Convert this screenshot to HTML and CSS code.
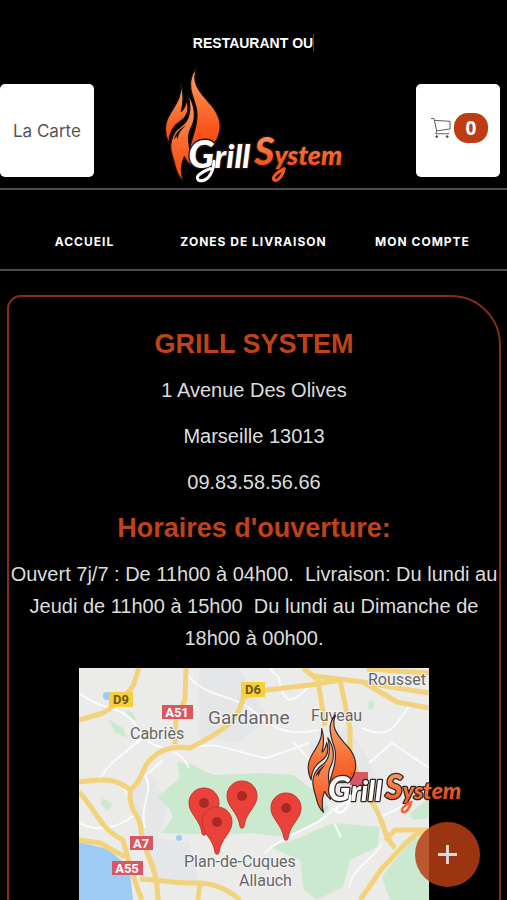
FILE: index.html
```html
<!DOCTYPE html>
<html lang="fr">
  <head>
    <meta charset="utf-8">
    <meta name="viewport" content="width=device-width, initial-scale=1">
    <title>Grill System</title>
    <link rel="stylesheet" href="styles.css">
  </head>
  <body>
    <svg class="defs" width="0" height="0" aria-hidden="true">
      <defs>
        <linearGradient id="fire" x1="0" y1="0" x2="0" y2="1">
          <stop offset="0" stop-color="#f9a070" />
          <stop offset="0.4" stop-color="#fb7a3c" />
          <stop offset="0.75" stop-color="#f9561d" />
          <stop offset="1" stop-color="#fb4c12" />
        </linearGradient>
        <g id="flame">
          <g stroke="#1c1210" stroke-width="4" stroke-linejoin="round" fill="url(#fire)">
            <path d="M126 25 C109 62 128 90 157 122 C190 155 205 190 190 228 C186 245 178 254 160 258 L104 262 C118 215 132 178 123 142 C115 112 100 82 109 54 C112 41 119 31 126 25 Z" />
            <path d="M78 72 C88 105 85 130 79 154 C89 145 93 133 95 120 C105 150 96 171 75 185 C54 198 43 220 41 250 C26 218 29 187 46 160 C61 134 80 112 78 72 Z" />
            <path d="M99 104 C123 139 123 177 108 204 C97 225 101 246 104 265 C108 285 116 300 108 317 C98 309 93 301 88 290 C77 314 77 337 84 362 C63 343 63 325 57 305 C50 281 43 264 49 242 C55 218 64 209 78 199 C104 182 110 148 99 104 Z" />
          </g>
          <path d="M57 239 C61 219 73 208 93 196 C76 213 71 220 68 239 L65 229 Z" fill="#1c1210" />
        </g>
        <g id="swash" fill="none" stroke-width="9" stroke-linecap="round">
          <path d="M177 304 C174 348 151 369 130 360 C119 348 140 337 166 326" stroke="#fff" />
          <path d="M386 334 C378 354 365 367 356 358 C352 348 366 338 388 326" stroke="#f9561d" />
        </g>
      </defs>
      <symbol id="pin" viewBox="0 0 32 50">
        <path d="M16 1 C7 1 1 8 1 16 C1 27 12 32 14 46 C14 49 18 49 18 46 C20 32 31 27 31 16 C31 8 25 1 16 1 Z" fill="#e8423a" stroke="#c5352e" />
        <circle cx="16" cy="16" r="5" fill="#a92a23" />
      </symbol>
    </svg>

    <header>
      <p class="typing">RESTAURANT OU</p>
      <div class="top">
        <a class="box carte" href="#carte">La Carte</a>
        <a class="brand" href="#">
          <svg class="logo" viewBox="24 18 546 360">
            <use href="#flame" />
            <text class="grill" x="100" y="324"><tspan class="capital">G</tspan>rill</text>
            <text class="system" x="298" y="316"><tspan class="capital">S</tspan>ystem</text>
            <use href="#swash" />
          </svg>
        </a>
        <button class="box cart" type="button" aria-label="Panier">
          <svg class="cart-icon" viewBox="0 0 22 22" fill="none" stroke="#555">
            <path d="M0 1 H3 L6 14 L20 12 V4 L4 3 M6 14 L5 17 H19" />
            <circle cx="6" cy="20" r="1" fill="#555" />
            <circle cx="17" cy="20" r="1" fill="#555" />
          </svg>
          <span class="count">0</span>
        </button>
      </div>
      <nav>
        <a href="#accueil">ACCUEIL</a>
        <a href="#zones">ZONES DE LIVRAISON</a>
        <a href="#compte">MON COMPTE</a>
      </nav>
    </header>

    <main class="card">
      <h2>GRILL SYSTEM</h2>
      <p>1 Avenue Des Olives</p>
      <p>Marseille 13013</p>
      <p>09.83.58.56.66</p>
      <h2>Horaires d'ouverture:</h2>
      <p>Ouvert 7j/7 : De 11h00 à 04h00.&nbsp; Livraison: Du lundi au Jeudi de 11h00 à 15h00&nbsp; Du lundi au Dimanche de 18h00 à 00h00.</p>
      <svg class="map" viewBox="0 0 350 232">
        <rect width="350" height="232" fill="#ebebe9" />
        <g fill="#e5e6e8">
          <path d="M51 122 L68 100 L90 135 L78 170 L110 175 L120 215 L80 214 L60 170 Z" />
          <path d="M120 0 L160 0 L190 50 L160 75 L120 70 Z" />
          <path d="M230 75 L270 60 L300 110 L260 130 L238 115 Z" />
        </g>
        <!-- parcs -->
        <g fill="#cbe9cf">
          <path d="M98 94 L112 96 L134 107 L181 105 L214 107 L238 125 L250 140 L238 155 L204 169 L171 165 L140 167 L83 165 L94 149 L90 140 L78 129 L101 110 Z" />
          <path d="M191 179 L220 170 L254 155 L301 159 L298 179 L271 192 L264 219 L238 232 L225 222 L221 192 Z" />
          <path d="M350 165 L334 172 L318 189 L303 209 L311 232 H350 Z" />
          <path d="M30 52 L44 60 L48 70 L36 64 Z" />
          <path d="M47 42 L54 45 L58 53 L49 49 Z" />
          <path d="M24 130 L33 136 L29 143 L22 137 Z" />
          <path d="M290 32 L296 34 L293 42 L289 40 Z" />
          <path d="M330 146 L350 130 V150 L334 152 Z" />
        </g>
        <g fill="#9ccbf6">
          <path d="M0 174 L28 181 L42 192 L51 205 L54 232 H0 Z" />
          <circle cx="28" cy="28" r="4" />
          <circle cx="100" cy="170" r="3" />
        </g>
        <!-- petites routes -->
        <g fill="none" stroke="#fafafa" stroke-width="2">
          <path d="M0 25 C25 45 45 35 60 62 S95 70 110 100" />
          <path d="M20 112 C35 85 60 80 72 60 L40 90" />
          <path d="M107 5 C125 30 150 25 170 40 S200 70 240 62" />
          <path d="M111 80 C140 72 155 85 188 90 L230 75" />
          <path d="M0 155 C20 165 40 160 58 145 L45 120" />
          <path d="M66 108 L84 92 M66 108 C76 122 60 135 66 160" />
          <path d="M231 17 C215 35 205 40 200 10 L190 0" />
          <path d="M283 60 C310 72 315 60 330 38 M313 75 L350 100 M313 75 L290 95" />
          <path d="M215 75 C232 92 236 100 250 118 L286 108" />
          <path d="M185 185 C215 160 240 160 255 140 M255 155 L262 169" />
          <path d="M270 220 C273 200 290 195 304 175 M350 120 L316 142 L301 149" />
        </g>
        <!-- autoroutes -->
        <path fill="none" stroke="#f3d27c" stroke-width="5" stroke-linejoin="round" d="M0 52 L24 45 L41 34 L54 18 L60 0 M107 0 L106 32 L97 49 L96 76 M0 114 C18 112 36 108 51 122 C50 145 60 145 62 160 C62 185 78 190 79 232 M51 122 C65 112 62 98 73 90 C84 79 98 78 111 80 C135 68 160 55 164 30 L188 22 L231 17 L261 12 M0 124 C16 140 20 160 44 172 C49 190 52 205 63 232 M0 172 L21 175 L46 189 M61 211 C82 212 100 216 121 215 L119 232 M121 215 C138 216 150 222 161 232 M224 0 L239 12 L246 58 M235 8 L284 14 L318 34 L350 40 M284 14 L318 20 L350 25 M288 1 L350 5 M261 12 L271 60 V90 L291 132 C306 150 302 165 316 180 M350 162 C330 165 320 185 304 199 L281 232 M350 162 H316 L306 172" />
        <g class="place">
          <text x="51" y="71" font-size="16">Cabriès</text>
          <text x="129" y="56" font-size="19">Gardanne</text>
          <text x="232" y="53" font-size="16">Fuveau</text>
          <text x="289" y="17" font-size="16">Rousset</text>
          <text x="105" y="199" font-size="16">Plan-de-Cuques</text>
          <text x="160" y="218" font-size="16">Allauch</text>
        </g>
        <g class="sign">
          <rect x="30" y="24" width="24" height="15" fill="#f7cf3d" />
          <rect x="162" y="14" width="24" height="15" fill="#f7cf3d" />
          <rect x="83" y="37" width="31" height="14" fill="#d95762" />
          <rect x="51" y="168" width="23" height="14" fill="#d95762" />
          <rect x="33" y="193" width="31" height="14" fill="#d95762" />
          <rect x="271" y="104" width="18" height="13" fill="#d95762" />
          <text x="42" y="36" fill="#6b581c">D9</text>
          <text x="174" y="26" fill="#6b581c">D6</text>
          <text x="98" y="49" fill="#fff">A51</text>
          <text x="62" y="180" fill="#fff">A7</text>
          <text x="48" y="205" fill="#fff">A55</text>
        </g>
        <use href="#pin" x="109" y="119" width="32" height="50" />
        <use href="#pin" x="147" y="112" width="32" height="50" />
        <use href="#pin" x="122" y="138" width="32" height="50" />
        <use href="#pin" x="191" y="124" width="32" height="50" />
      </svg>
    </main>

    <svg class="floating-logo" viewBox="24 18 546 360" aria-hidden="true">
      <use href="#flame" />
      <text class="grill" x="100" y="324"><tspan class="capital">G</tspan>rill</text>
      <text class="system" x="298" y="316"><tspan class="capital">S</tspan>ystem</text>
      <use href="#swash" />
    </svg>
    <button class="fab" type="button" aria-label="Ouvrir le menu">
      <svg viewBox="0 0 20 20" stroke="#ddd" stroke-width="3"><path d="M10 0 V20 M0 10 H20" /></svg>
    </button>
  </body>
</html>
```
FILE: styles.css
```css
* {
  box-sizing: border-box;
}
body {
  margin: 0;
  background-color: #000;
  color: #ddd;
  font-family: "Liberation Sans", Arial, sans-serif;
}
a {
  color: inherit;
  text-decoration: none;
}
.defs {
  position: absolute;
}
.typing {
  width: fit-content;
  margin: 34px auto 0;
  border-right: 1px solid #444;
  color: #fff;
  font-size: 14px;
  font-weight: bold;
  line-height: 18px;
}
.top {
  display: grid;
  grid-template-columns: 1fr auto 1fr;
  align-items: end;
  padding: 14px 0 2px;
  border-bottom: 2px solid #4c4c4c;
}
.box {
  display: flex;
  align-items: center;
  height: 93px;
  margin-bottom: 9px;
  border: none;
  border-radius: 5px;
  background-color: #fff;
  color: #555;
  font-family: Inter, sans-serif;
  font-size: 17px;
}
.carte {
  justify-self: start;
  padding: 0 13px;
}
.cart {
  justify-self: end;
  gap: 2px;
  margin-right: 7px;
  padding: 0 12px 6px 15px;
  cursor: pointer;
}
.cart-icon {
  width: 21px;
  height: 22px;
}
.count {
  width: 34px;
  border-radius: 14px;
  background-color: #bd3c12;
  color: #fff;
  font-family: "Open Sans", sans-serif;
  font-size: 19px;
  font-weight: bold;
  line-height: 30px;
  text-align: center;
}
.logo {
  display: block;
  width: 182px;
  height: 120px;
}
.grill,
.system {
  stroke: #1c1210;
  stroke-width: 9px;
  stroke-linejoin: round;
  paint-order: stroke;
  font-family: Lato, sans-serif;
  font-style: italic;
  font-weight: 900;
}
.grill {
  fill: #fff;
  font-size: 98px;
}
.system {
  fill: url(#fire);
  font-size: 80px;
}
.capital {
  font-size: 116px;
}
nav {
  display: grid;
  grid-template-columns: repeat(3, 1fr);
  padding: 42px 0 17px;
  border-bottom: 2px solid #4c4c4c;
  color: #fff;
  font-family: Inter, sans-serif;
  font-size: 12px;
  font-weight: bold;
  letter-spacing: 1px;
  line-height: 20px;
  text-align: center;
  white-space: nowrap;
}
.card {
  margin: 24px 6px 0 7px;
  padding: 31px 0 60px;
  border: 2px solid #7f3217;
  border-radius: 14px 50px 14px 14px;
  text-align: center;
}
.card h2,
.card p {
  margin: 0 0 14px;
  line-height: 32px;
}
.card h2 {
  color: #bf4218;
  font-size: 27px;
}
.card p {
  font-size: 20px;
}
.map {
  display: block;
  width: 350px;
  max-width: 100%;
  margin: 0 auto;
}
.place {
  fill: #666;
  stroke: #f4f4f4;
  stroke-width: 2px;
  paint-order: stroke;
  font-family: Roboto, sans-serif;
}
.sign {
  font-family: Roboto, sans-serif;
  font-size: 13px;
  font-weight: bold;
  text-anchor: middle;
}
.floating-logo {
  position: fixed;
  right: 43px;
  bottom: 83px;
  width: 158px;
  height: 104px;
  opacity: 0.9;
}
.fab {
  position: fixed;
  right: 27px;
  bottom: 13px;
  display: grid;
  place-items: center;
  width: 65px;
  height: 65px;
  padding: 0;
  border: none;
  border-radius: 50%;
  background-color: rgba(182, 62, 20, 0.85);
  cursor: pointer;
}
.fab svg {
  width: 19px;
  height: 19px;
}
```
